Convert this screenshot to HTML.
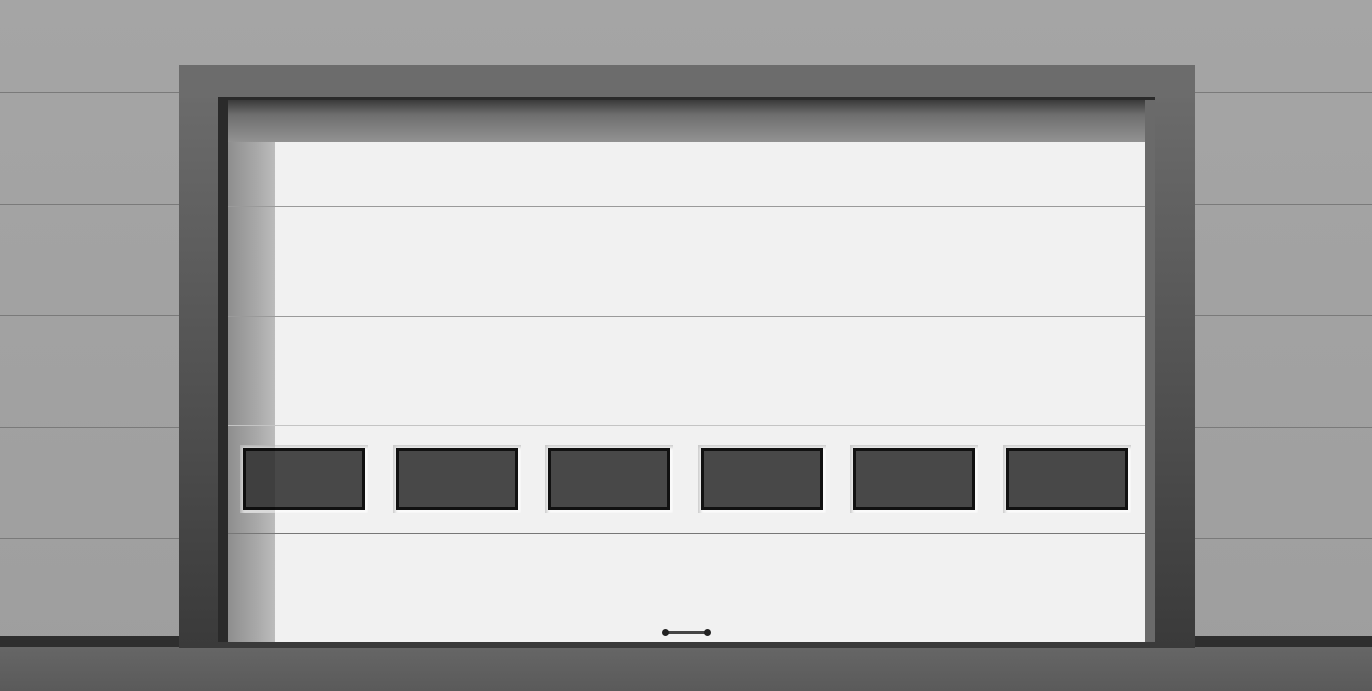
<!DOCTYPE html>
<html><head><style>
*{margin:0;padding:0;box-sizing:border-box}
body{width:1372px;height:691px;overflow:hidden;background:#a2a2a2;position:relative;font-family:"Liberation Sans",sans-serif}
div{position:absolute}
.wl{left:0;width:1372px;height:1px;background:#7a7a7a}
.pl{left:228px;width:917px;height:1px;background:#9a9a9a}
.win{top:445px;width:128px;height:68px;background:#fafafa;box-shadow:inset 2px 2px 3px #c8c8c8}
.win i{position:absolute;left:3px;top:3px;right:3px;bottom:3px;background:#484848;border:3px solid #111}
</style></head><body>
<div style="left:0;top:0;width:1372px;height:691px;background:linear-gradient(#a5a5a5,#9e9e9e)"></div>
<div class="wl" style="top:92px"></div>
<div class="wl" style="top:204px"></div>
<div class="wl" style="top:315px"></div>
<div class="wl" style="top:427px"></div>
<div class="wl" style="top:538px"></div>
<div style="left:0;top:636px;width:1372px;height:12px;background:#2e2e2e"></div>
<div style="left:0;top:647px;width:1372px;height:44px;background:linear-gradient(#666,#5a5a5a)"></div>
<div style="left:179px;top:65px;width:1016px;height:583px;background:linear-gradient(#6e6e6e,#3a3a3a)"></div>
<div style="left:179px;top:65px;width:1016px;height:33px;background:#6c6c6c"></div>
<div style="left:218px;top:97px;width:937px;height:545px;background:#2a2a2a"></div>
<div style="left:228px;top:100px;width:917px;height:542px;background:#f1f1f1"></div>
<div style="left:228px;top:100px;width:47px;height:542px;background:linear-gradient(90deg,#8e8e8e,#a8a8a8 60%,#bcbcbc)"></div>
<div style="left:228px;top:100px;width:917px;height:42px;background:linear-gradient(#3a3a3a,#6e6e6e 35%,#929292)"></div>
<div style="left:1145px;top:100px;width:10px;height:542px;background:#6a6a6a"></div>
<div class="pl" style="top:206px"></div>
<div class="pl" style="top:316px"></div>
<div class="pl" style="top:425px;background:#c4c4c4"></div>
<div class="pl" style="top:533px;background:#777"></div>
<div class="win" style="left:240px"><i></i></div>
<div class="win" style="left:393px"><i></i></div>
<div class="win" style="left:545px"><i></i></div>
<div class="win" style="left:698px"><i></i></div>
<div class="win" style="left:850px"><i></i></div>
<div class="win" style="left:1003px"><i></i></div>
<div style="left:240px;top:445px;width:35px;height:68px;background:rgba(0,0,0,0.12)"></div>
<div style="left:664px;top:631px;width:46px;height:3px;background:#444;border-radius:2px"></div>
<div style="left:662px;top:629px;width:7px;height:7px;background:#222;border-radius:50%"></div>
<div style="left:704px;top:629px;width:7px;height:7px;background:#222;border-radius:50%"></div>
</body></html>
